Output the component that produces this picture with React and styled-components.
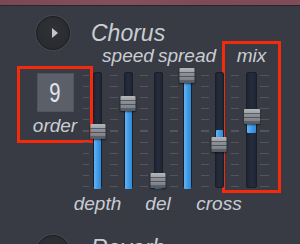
import React from "react";
import styled, { createGlobalStyle } from "styled-components";

const GlobalStyle = createGlobalStyle`
  html, body {
    margin: 0;
    padding: 0;
    background: #383b43;
    overflow: hidden;
  }
  body {
    font-family: "Liberation Sans", Arial, sans-serif;
  }
`;

const Page = styled.div`
  width: 300px;
  height: 244px;
  overflow: hidden;
  background: #383b43;
`;

const TopBar = styled.div`
  height: 5px;
  background: linear-gradient(100deg, #7a4752 0%, #83505b 40%, #7d4a55 70%, #804c57 100%);
  border-bottom: 1px solid #25272c;
`;

const Section = styled.section`
  display: grid;
  grid-template-columns: 76px 1fr;
  padding: 0 0 10px 17px;
`;

const Side = styled.div`
  display: flex;
  flex-direction: column;
`;

const Main = styled.div`
  display: flex;
  flex-direction: column;
  padding-top: ${p => p.$pad}px;
`;

const ToggleButton = styled.div`
  width: 34px;
  height: 34px;
  box-sizing: border-box;
  margin: 10px 0 0 19px;
  border-radius: 50%;
  border: 1px solid #1d1e22;
  background: radial-gradient(circle at 50% 40%, #303237 0%, #2a2c30 60%, #25272b 100%);
  box-shadow: 0 0 0 1px rgba(90, 94, 102, 0.35);
  display: flex;
  align-items: center;
  justify-content: center;
  padding-left: 3px;
`;

const Title = styled.div`
  height: 20px;
  line-height: 24px;
  font-size: 23px;
  font-style: italic;
  color: #c9cdd3;
  margin-left: -2px;
  white-space: nowrap;
`;

const OrderBox = styled.div`
  margin-top: 16px;
  width: 76px;
  height: 77px;
  box-sizing: border-box;
  border: 3px solid #f5290c;
  display: flex;
  flex-direction: column;
  align-items: center;
  padding-top: 4px;
`;

const NumberDisplay = styled.div`
  width: 37px;
  height: 39px;
  box-sizing: border-box;
  background: #5b5f69;
  border: 1px solid #50545d;
  display: flex;
  align-items: center;
  justify-content: center;
  color: #e3e5e9;
  font-size: 28px;
  span {
    display: inline-block;
    transform: scaleX(0.72);
  }
`;

const Label = styled.div`
  font-size: 19px;
  line-height: 22px;
  font-style: italic;
  color: #c9cdd3;
  white-space: nowrap;
  margin-top: ${p => p.$top || 0}px;
`;

const SliderRow = styled.div`
  display: flex;
  align-items: flex-start;
  margin-left: -11px;
`;

const Column = styled.div`
  width: ${p => p.$w}px;
  flex: none;
  display: flex;
  flex-direction: column;
  align-items: center;
`;

const Boxed = styled(Column)`
  box-sizing: border-box;
  border: 3px solid #f5290c;
  margin-left: -15px;
  padding-bottom: 2px;
`;

const LabelSlot = styled.div`
  height: ${p => p.$h}px;
  box-sizing: border-box;
  display: flex;
  align-items: flex-end;
  padding-bottom: 5px;
`;

const Track = styled.div`
  position: relative;
  width: ${p => p.$tw}px;
  height: 116px;
  box-sizing: border-box;
  border: 1px solid #1a1e27;
  border-radius: 2px;
  background: linear-gradient(to right, #1e2432, #252c3c 50%, #1f2533);

  &::before,
  &::after {
    content: "";
    position: absolute;
    top: 2px;
    height: 112px;
    background: repeating-linear-gradient(
      to bottom,
      #50555e 0,
      #50555e 1px,
      transparent 1px,
      transparent 11.1px
    );
  }
  &::before {
    left: ${p => p.$tick}px;
    width: ${p => p.$tickW}px;
  }
  &::after {
    display: ${p => (p.$endTick ? "block" : "none")};
    right: -13px;
    width: 9px;
  }
`;

const Fill = styled.div`
  position: absolute;
  left: 0;
  right: 0;
  background: linear-gradient(to right, #62b4f6, #3d98e6 60%, #3489d2);
  border-radius: 1px;
`;

const Handle = styled.div`
  position: absolute;
  left: 50%;
  width: ${p => p.$hw}px;
  height: 15px;
  transform: translateX(-50%);
  border-radius: 1px;
  background: linear-gradient(
    to bottom,
    #b3b7bc 0,
    #9fa3a9 4px,
    #585c63 4px,
    #585c63 5px,
    #8f9399 5px,
    #868a90 8px,
    #51555b 8px,
    #51555b 9px,
    #878b91 9px,
    #7d8187 12px,
    #5f6369 12px,
    #55595f 15px
  );
  box-shadow: 0 1px 2px rgba(0, 0, 0, 0.55);
  z-index: 1;
`;

const sliders = [
  { name: "depth", w: 31, pos: "bottom", handle: 51, fill: [58, 116], tick: -11, tickW: 6 },
  { name: "speed", w: 30, pos: "top", handle: 23, fill: [30, 116] },
  { name: "del", w: 30, pos: "bottom", handle: 100, fill: [107, 116] },
  { name: "spread", w: 28, pos: "top", handle: -5, fill: [1, 116], tick: -14 },
  { name: "cross", w: 36, pos: "bottom", handle: 64, fill: [57, 72] },
];

const Slider = ({ s, tw = 9, hw = 15, endTick }) => (
  <Track $tw={tw} $tick={s.tick ?? -15} $tickW={s.tickW ?? 8} $endTick={endTick}>
    <Fill style={{ top: s.fill[0], height: s.fill[1] - s.fill[0] }} />
    <Handle $hw={hw} style={{ top: s.handle }} />
  </Track>
);

const PlayIcon = () => (
  <svg width="6" height="10" viewBox="0 0 6 10">
    <path d="M0 0 L6 5 L0 10 Z" fill="#c3c6cb" />
  </svg>
);

export default function App() {
  const mix = { name: "mix", handle: 36, fill: [43, 60], tick: -16 };
  return (
    <Page>
      <GlobalStyle />
      <TopBar />
      <Section>
        <Side>
          <ToggleButton>
            <PlayIcon />
          </ToggleButton>
          <OrderBox>
            <NumberDisplay>
              <span>9</span>
            </NumberDisplay>
            <Label $top={3}>order</Label>
          </OrderBox>
        </Side>
        <Main $pad={15}>
          <Title>Chorus</Title>
          <SliderRow>
            {sliders.map(s => (
              <Column key={s.name} $w={s.w}>
                <LabelSlot $h={31}>{s.pos === "top" && <Label>{s.name}</Label>}</LabelSlot>
                <Slider s={s} />
                {s.pos === "bottom" ? <Label $top={5}>{s.name}</Label> : <Label $top={5}>&nbsp;</Label>}
              </Column>
            ))}
            <Boxed $w={59}>
              <LabelSlot $h={28}>
                <Label>mix</Label>
              </LabelSlot>
              <Slider s={mix} tw={11} hw={16} endTick />
            </Boxed>
          </SliderRow>
        </Main>
      </Section>
      <Section>
        <Side>
          <ToggleButton>
            <PlayIcon />
          </ToggleButton>
        </Side>
        <Main $pad={11}>
          <Title>Reverb</Title>
        </Main>
      </Section>
    </Page>
  );
}
